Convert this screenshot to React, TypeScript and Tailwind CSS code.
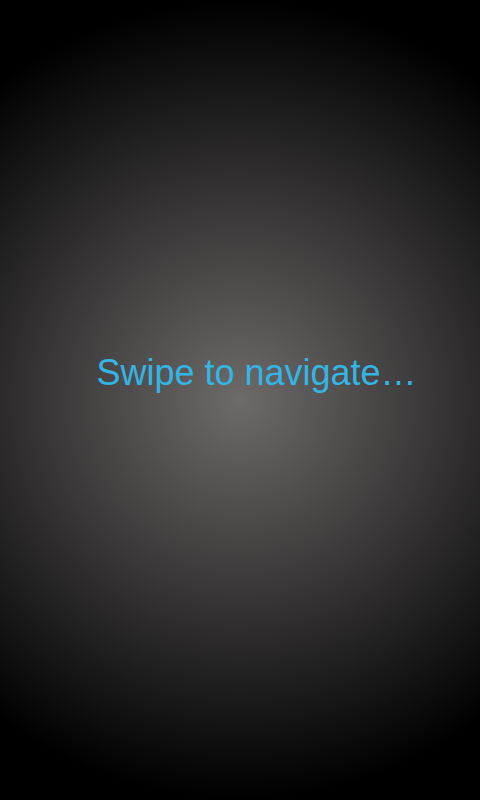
const App = () => {
  return (
    <div className="flex h-[800px] w-[480px] items-center justify-center bg-[radial-gradient(circle_400px_at_50%_50%,#6e6a6a_0%,#000000_100%)] pb-[55px] pl-[33px]">
      <span className="font-['Liberation_Sans',Arial,sans-serif] text-[36px] leading-[36px] text-[#33b5e5]">
        Swipe to navigate…
      </span>
    </div>
  );
};

export default App;
